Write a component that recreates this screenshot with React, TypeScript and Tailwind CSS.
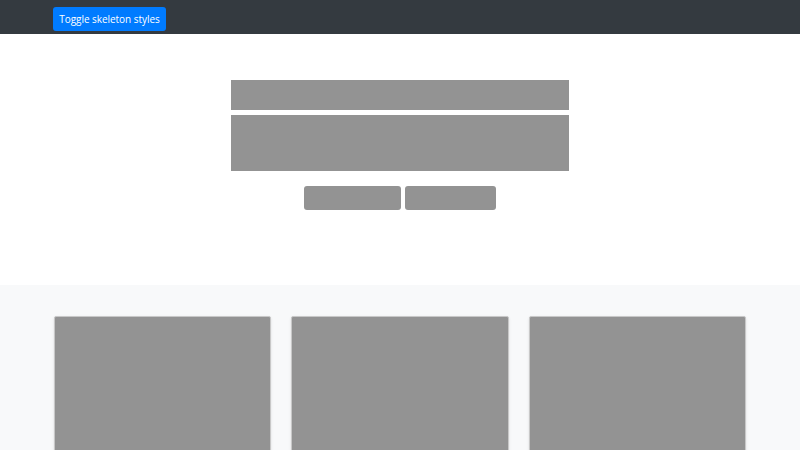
import { useState } from 'react';

export default function App() {
  const [skeleton, setSkeleton] = useState(true);
  const block = skeleton ? 'bg-[#939393]' : 'bg-[#dee2e6]';

  return (
    <div className="min-h-screen bg-white font-['Open_Sans',sans-serif]">
      <nav className="h-[34px] bg-[#343a40]">
        <div className="w-[694px] mx-auto pt-[5px]">
          <button
            onClick={() => setSkeleton(!skeleton)}
            className="h-[24px] w-[113px] rounded-[3px] bg-[#007bff] text-white text-[10px] leading-[24px] text-center whitespace-nowrap tracking-[-0.05px]"
          >
            Toggle skeleton styles
          </button>
        </div>
      </nav>

      <section className="h-[251px] pt-[46px] flex flex-col items-center">
        <div className={`w-[338px] h-[30px] ${block}`} />
        <div className={`w-[338px] h-[56px] mt-[5px] ${block}`} />
        <div className="flex gap-[4px] mt-[15px]">
          <div className={`w-[97px] h-[24px] rounded-[3px] ${block}`} />
          <div className={`w-[91px] h-[24px] rounded-[3px] ${block}`} />
        </div>
      </section>

      <section className="bg-[#f8f9fa] pt-[31px] pb-12">
        <div className="w-[692px] mx-auto grid grid-cols-3 gap-[20px]">
          {[0, 1, 2].map(i => (
            <div
              key={i}
              className={`h-[300px] rounded-[2px] border border-[#c8c8c8] shadow-sm ${block}`}
            />
          ))}
        </div>
      </section>
    </div>
  );
}
